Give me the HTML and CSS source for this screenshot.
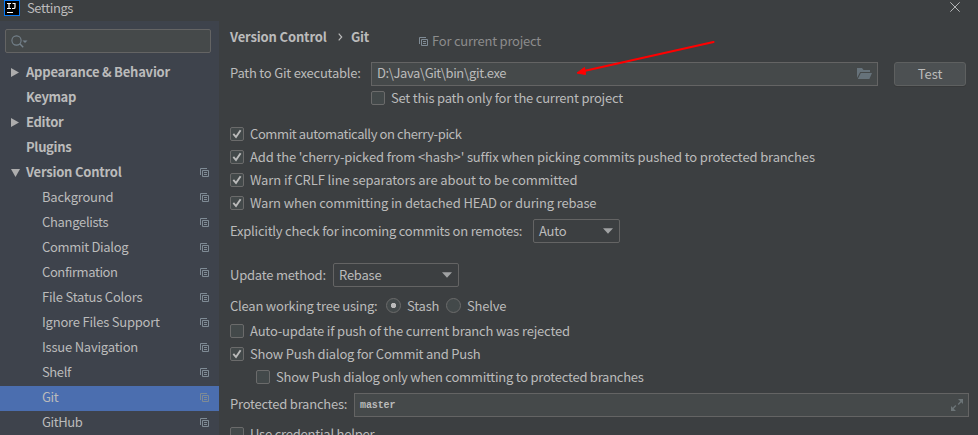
FILE: index.html
```html
<!DOCTYPE html>
<html lang="en">
<head>
<meta charset="utf-8">
<title>Settings</title>
<link rel="stylesheet" href="styles.css">
</head>
<body>
<svg class="defs" width="0" height="0">
  <symbol id="copy" viewBox="0 0 9 9"><path d="M.5 7V.5H7M2.5 2.5h6v6h-6zM4 4.5h3M4 6.5h3" fill="none" stroke="currentColor"/></symbol>
  <symbol id="check" viewBox="0 0 14 14"><path d="M3.3 6.8 6 10l4.600-6.800" fill="none" stroke="currentColor" stroke-width="1.9"/></symbol>
  <symbol id="down" viewBox="0 0 10 6"><path d="M0 .3h10L5 5.800z" fill="currentColor"/></symbol>
</svg>
<header class="titlebar">
  <svg class="logo" width="16" height="16" viewBox="0 0 16 16"><rect width="16" height="16" fill="#087cfa"/><rect x="1" y="1" width="14" height="14" fill="#000"/><path d="M3 3.500h4M5 3.500v5M3 8.500h4M8.500 3.500H11v3.700q0 1.300-1.300 1.300H8M3 12.500h6" fill="none" stroke="#fff" stroke-width="1.2"/></svg>
  <span class="title">Settings</span>
  <svg class="close" width="10" height="10" viewBox="0 0 10 10"><path d="M.3.3l9.400 9.400M9.700.3.3 9.700" stroke="#b4b6b7" fill="none"/></svg>
</header>
<div class="body">
  <nav class="sidebar">
    <div class="search"><svg width="18" height="14" viewBox="0 0 18 14"><circle cx="5.500" cy="5.500" r="4.600" fill="none" stroke="#75828c" stroke-width="1.1"/><path d="M8.800 8.800l3.400 3.400" stroke="#75828c" stroke-width="1.4"/><path d="M11.500 5.500h5L14 8z" fill="#75828c"/></svg></div>
    <ul class="tree">
      <li class="top"><svg class="arrow" width="8" height="9"><path d="M0 0l8 4.500L0 9z"/></svg><span>Appearance &amp; Behavior</span></li>
      <li class="top"><span class="tight">Keymap</span></li>
      <li class="top"><svg class="arrow" width="8" height="9"><path d="M0 0l8 4.500L0 9z"/></svg><span class="snug">Editor</span></li>
      <li class="top"><span class="snug">Plugins</span></li>
      <li class="top"><svg class="arrow" width="9" height="8"><path d="M0 0h9L4.500 8z"/></svg><span>Version Control</span><svg class="copy"><use href="#copy"/></svg></li>
      <li><span>Background</span><svg class="copy"><use href="#copy"/></svg></li>
      <li><span class="snug">Changelists</span><svg class="copy"><use href="#copy"/></svg></li>
      <li><span class="snug">Commit Dialog</span><svg class="copy"><use href="#copy"/></svg></li>
      <li><span class="tight">Confirmation</span><svg class="copy"><use href="#copy"/></svg></li>
      <li><span>File Status Colors</span><svg class="copy"><use href="#copy"/></svg></li>
      <li><span>Ignore Files Support</span><svg class="copy"><use href="#copy"/></svg></li>
      <li><span>Issue Navigation</span><svg class="copy"><use href="#copy"/></svg></li>
      <li><span class="tight">Shelf</span><svg class="copy"><use href="#copy"/></svg></li>
      <li class="selected"><span class="tight">Git</span><svg class="copy"><use href="#copy"/></svg></li>
      <li><span class="tight">GitHub</span><svg class="copy"><use href="#copy"/></svg></li>
    </ul>
  </nav>
  <main class="content">
    <div class="crumbs"><b class="crumb-vc">Version Control</b><svg class="chev" width="5" height="8"><path d="M.7.7 3.700 4 .7 7.300" fill="none" stroke="#bbb" stroke-width="1.2"/></svg><b class="crumb-git">Git</b><span class="scope"><svg class="copy"><use href="#copy"/></svg><span>For current project</span></span></div>
    <div class="row path"><span class="label path-label">Path to Git executable:</span><div class="field path-field"><span class="tight">D:\Java\Git\bin\git.exe</span><svg width="15" height="12" viewBox="0 0 15 12"><path d="M0 10V0h5l1.500 2H13v2H3.200L0 10zM3.800 5H15l-2.600 6H.8z" fill="#66727a"/></svg></div><button class="test">Test</button></div>
    <div class="option own"><i class="box"></i><span>Set this path only for the current project</span></div>
    <div class="group commits">
      <div class="option"><i class="box"><svg><use href="#check"/></svg></i><span class="tight">Commit automatically on cherry-pick</span></div>
      <div class="option"><i class="box"><svg><use href="#check"/></svg></i><span class="loose">Add the 'cherry-picked from &lt;hash&gt;' suffix when picking commits pushed to protected branches</span></div>
      <div class="option"><i class="box"><svg><use href="#check"/></svg></i><span class="looser">Warn if CRLF line separators are about to be committed</span></div>
      <div class="option"><i class="box"><svg><use href="#check"/></svg></i><span class="loose">Warn when committing in detached HEAD or during rebase</span></div>
    </div>
    <div class="row incoming"><span class="label incoming-label">Explicitly check for incoming commits on remotes:</span><div class="combo auto"><span>Auto</span><svg><use href="#down"/></svg></div></div>
    <div class="row update"><span class="label update-label">Update method:</span><div class="combo rebase"><span>Rebase</span><svg><use href="#down"/></svg></div></div>
    <div class="row clean"><span class="label clean-label">Clean working tree using:</span><i class="radio on"></i><span class="stash">Stash</span><i class="radio"></i><span class="shelve">Shelve</span></div>
    <div class="group push">
      <div class="option"><i class="box"></i><span class="rejected">Auto-update if push of the current branch was rejected</span></div>
      <div class="option"><i class="box"><svg><use href="#check"/></svg></i><span>Show Push dialog for Commit and Push</span></div>
      <div class="option nested"><i class="box"></i><span class="only">Show Push dialog only when committing to protected branches</span></div>
    </div>
    <div class="row protected"><span class="label protected-label">Protected branches:</span><div class="field branches"><span>master</span><svg width="12" height="12"><path d="M7 0h5v5l-1.700-1.700-2.600 2.600-1-1 2.600-2.600zM0 7l1.700 1.700 2.600-2.600 1 1-2.600 2.600L5 12H0z" fill="#6c7477"/></svg></div></div>
    <div class="option credential"><i class="box"></i><span>Use credential helper</span></div>
  </main>
</div>
<svg class="pointer" width="140" height="38" viewBox="0 0 140 38"><path d="M137.500 3 8 32" stroke="red" stroke-width="2.200" stroke-linecap="round"/><path d="M1 34 8.500 28.500 9.600 35.500z" fill="red" stroke="red"/></svg>
</body>
</html>
```
FILE: styles.css
```css
* { box-sizing: border-box; }
body { margin: 0; width: 978px; height: 435px; overflow: hidden; background: #3c3f41; color: #bbb; font: 13px/24px "Noto Sans CJK SC", "Noto Sans", sans-serif; letter-spacing: -.22px; position: relative; }
.defs { position: absolute; }
svg { flex: none; display: block; }
span, b { white-space: nowrap; }
.snug { letter-spacing: -.31px; }
.tight { letter-spacing: -.4px; }
.loose { letter-spacing: -.14px; }
.looser { letter-spacing: -.09px; }
.rejected { letter-spacing: -.17px; }
.only { letter-spacing: -.25px; }
.titlebar { height: 21px; display: flex; align-items: flex-start; padding-left: 4px; }
.title { margin-left: 7px; line-height: 16px; letter-spacing: -.4px; }
.close { margin: 2px 18px 0 auto; }
.body { display: flex; height: 414px; }
.sidebar { width: 219px; background: #3e434c; overflow: hidden; }
.search { margin: 8px 8px 8px 5px; height: 24px; border: 1px solid #646464; border-radius: 2px; background: #45494a; padding: 5px; }
.tree { list-style: none; margin: 0; padding: 0; }
.tree li { height: 25px; line-height: 21px; padding: 0 10px 2px 42px; display: flex; align-items: center; }
.tree li.top { padding-left: 11px; font-weight: 700; }
.tree li.top > span:first-child { margin-left: 15px; }
.tree span { margin-bottom: 2px; }
.tree .arrow { fill: #adadad; margin-right: 7px; }
.tree .arrow[width="9"] { margin-right: 6px; }
.tree .selected { background: #4b6eaf; }
.copy { width: 9px; height: 9px; color: #7f8b95; }
.tree .copy { margin-left: auto; }
.content { flex: 1; padding-left: 11px; }
.crumbs { height: 32px; display: flex; align-items: center; }
.crumb-vc { width: 97px; letter-spacing: -.15px; }
.crumb-git { width: 19px; }
.chev { margin: 0 8px 0 11px; }
.scope { display: flex; align-items: center; color: #8c8c8c; margin: 8px 0 0 49px; gap: 4px; }
.scope > span { margin-bottom: 1px; }
.row, .option { display: flex; align-items: center; }
.label { flex: none; }
.path { margin-top: 9px; height: 24px; }
.path-label { width: 141px; }
.field { height: 24px; border: 1px solid #646464; background: #45494a; display: flex; align-items: center; justify-content: space-between; padding: 0 5px; }
.path-field { width: 507px; }
.path-label, .path-field span, .protected-label { line-height: 22px; margin-bottom: 2px; }
.test { width: 72px; height: 24px; margin-left: 16px; border: 1px solid #5e6060; border-radius: 3px; background: #4c5052; color: #bbb; font: inherit; line-height: 20px; padding: 0; box-shadow: 0 1px #37393a; }
.option { height: 23px; align-items: flex-start; line-height: 21px; }
.box { width: 14px; height: 14px; flex: none; margin: 4px 6px 0 0; border: 1px solid #6b6b6b; border-radius: 2px; background: #43494a; color: #bbb; }
.box svg { width: 14px; height: 14px; margin: -1px; }
.own { margin: 1px 0 0 141px; }
.commits { margin-top: 13px; }
.incoming { margin-top: 4px; height: 24px; }
.incoming-label { width: 303px; }
.combo { height: 24px; border: 1px solid #646464; border-radius: 2px; display: flex; align-items: center; justify-content: space-between; padding: 0 6px 0 5px; }
.combo svg { width: 10px; height: 6px; color: #a0a2a3; }
.auto { width: 87px; }
.rebase { width: 126px; }
.update { margin-top: 20px; height: 24px; }
.update-label { width: 103px; }
.clean { margin-top: 7px; height: 23px; }
.clean-label { width: 156px; }
.radio { width: 15px; height: 15px; border: 1px solid #6b6b6b; border-radius: 50%; background: #43494a; flex: none; }
.radio.on { background: radial-gradient(circle, #bbb 2.3px, #43494a 3px); }
.stash { width: 39px; margin-left: 6px; }
.shelve { margin-left: 6px; }
.push { margin-top: 3px; }
.nested { margin-left: 26px; }
.protected { margin-top: 4px; height: 24px; }
.protected-label { width: 124px; }
.branches { width: 615px; }
.branches span { font: bold 10px "Liberation Mono", monospace; letter-spacing: -.1px; }
.credential { margin-top: 6px; }
.pointer { position: absolute; left: 576px; top: 39px; }
```
